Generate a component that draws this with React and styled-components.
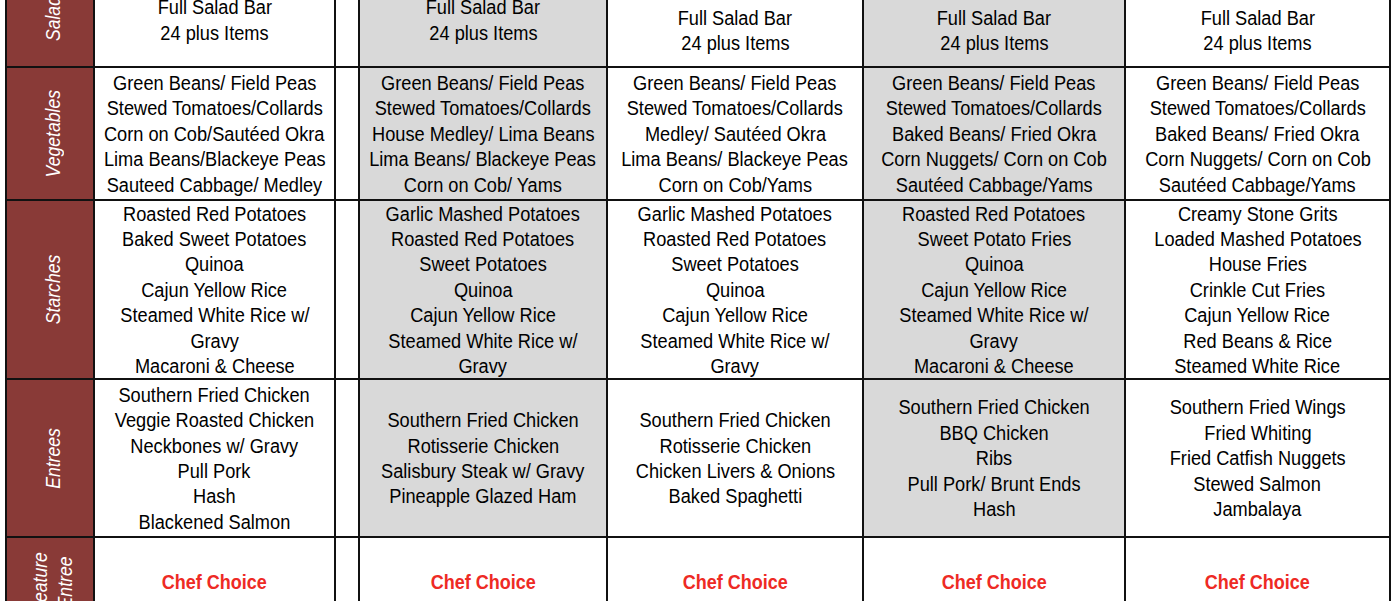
import React from 'react';
import styled, { createGlobalStyle } from 'styled-components';

const GlobalStyle = createGlobalStyle`
  html, body {
    margin: 0;
    padding: 0;
    background: #ffffff;
    overflow: hidden;
  }
`;

const rows = [
  {
    label: ['Salad'],
    height: 72,
    labelLift: 22,
    cells: [
      ['Full Salad Bar', '24 plus Items'],
      ['Full Salad Bar', '24 plus Items'],
      ['Full Salad Bar', '24 plus Items'],
      ['Full Salad Bar', '24 plus Items'],
      ['Full Salad Bar', '24 plus Items'],
    ],
    lift: [21, 21, 0, 0, 0],
  },
  {
    label: ['Vegetables'],
    height: 131,
    cells: [
      ['Green Beans/ Field Peas', 'Stewed Tomatoes/Collards', 'Corn on Cob/Sautéed Okra', 'Lima Beans/Blackeye Peas', 'Sauteed Cabbage/ Medley'],
      ['Green Beans/ Field Peas', 'Stewed Tomatoes/Collards', 'House Medley/ Lima Beans', 'Lima Beans/ Blackeye Peas', 'Corn on Cob/ Yams'],
      ['Green Beans/ Field Peas', 'Stewed Tomatoes/Collards', 'Medley/ Sautéed Okra', 'Lima Beans/ Blackeye Peas', 'Corn on Cob/Yams'],
      ['Green Beans/ Field Peas', 'Stewed Tomatoes/Collards', 'Baked Beans/ Fried Okra', 'Corn Nuggets/ Corn on Cob', 'Sautéed Cabbage/Yams'],
      ['Green Beans/ Field Peas', 'Stewed Tomatoes/Collards', 'Baked Beans/ Fried Okra', 'Corn Nuggets/ Corn on Cob', 'Sautéed Cabbage/Yams'],
    ],
  },
  {
    label: ['Starches'],
    height: 177,
    cells: [
      ['Roasted Red Potatoes', 'Baked Sweet Potatoes', 'Quinoa', 'Cajun Yellow Rice', 'Steamed White Rice w/', 'Gravy', 'Macaroni & Cheese'],
      ['Garlic Mashed Potatoes', 'Roasted Red Potatoes', 'Sweet Potatoes', 'Quinoa', 'Cajun Yellow Rice', 'Steamed White Rice w/', 'Gravy'],
      ['Garlic Mashed Potatoes', 'Roasted Red Potatoes', 'Sweet Potatoes', 'Quinoa', 'Cajun Yellow Rice', 'Steamed White Rice w/', 'Gravy'],
      ['Roasted Red Potatoes', 'Sweet Potato Fries', 'Quinoa', 'Cajun Yellow Rice', 'Steamed White Rice w/', 'Gravy', 'Macaroni & Cheese'],
      ['Creamy Stone Grits', 'Loaded Mashed Potatoes', 'House Fries', 'Crinkle Cut Fries', 'Cajun Yellow Rice', 'Red Beans & Rice', 'Steamed White Rice'],
    ],
  },
  {
    label: ['Entrees'],
    height: 156,
    cells: [
      ['Southern Fried Chicken', 'Veggie Roasted Chicken', 'Neckbones w/ Gravy', 'Pull Pork', 'Hash', 'Blackened Salmon'],
      ['Southern Fried Chicken', 'Rotisserie Chicken', 'Salisbury Steak w/ Gravy', 'Pineapple Glazed Ham'],
      ['Southern Fried Chicken', 'Rotisserie Chicken', 'Chicken Livers & Onions', 'Baked Spaghetti'],
      ['Southern Fried Chicken', 'BBQ Chicken', 'Ribs', 'Pull Pork/ Brunt Ends', 'Hash'],
      ['Southern Fried Wings', 'Fried Whiting', 'Fried Catfish Nuggets', 'Stewed Salmon', 'Jambalaya'],
    ],
  },
  {
    label: ['Feature', 'Entree'],
    height: 88,
    feature: true,
    cells: [['Chef Choice'], ['Chef Choice'], ['Chef Choice'], ['Chef Choice'], ['Chef Choice']],
  },
];

// days 2 and 4 are shaded grey, except on the feature row
const shaded = [false, true, false, true, false];

const DayCell = ({ lines, shade, lift, feature }) => (
  <ItemCell $shaded={shade} $lift={lift}>
    {lines.map((line, li) => (
      <Line key={li} $feature={feature}>{line}</Line>
    ))}
  </ItemCell>
);

const App = () => (
  <>
    <GlobalStyle />
    <MenuGrid $rows={rows.map((r) => r.height)}>
      {rows.map((row, ri) => (
        <React.Fragment key={ri}>
          <LabelCell $lift={row.labelLift || 0}>
            <LabelText>
              {row.label.map((l) => (
                <span key={l}>{l}</span>
              ))}
            </LabelText>
          </LabelCell>
          {row.cells.map((lines, ci) => (
            <React.Fragment key={ci}>
              {ci === 1 && <Spacer />}
              <DayCell
                lines={lines}
                shade={shaded[ci] && !row.feature}
                lift={row.lift ? row.lift[ci] : 0}
                feature={row.feature}
              />
            </React.Fragment>
          ))}
        </React.Fragment>
      ))}
    </MenuGrid>
  </>
);

const MenuGrid = styled.div`
  display: grid;
  grid-template-columns: 86px 239px 22px 246px 254px 260px 263px;
  grid-template-rows: ${(p) => p.$rows.map((h) => `${h}px`).join(' ')};
  gap: 2px;
  padding: 2px;
  width: max-content;
  margin: -8px 0 0 5px;
  background: #111111;
`;

const LabelCell = styled.div`
  display: flex;
  align-items: center;
  justify-content: center;
  padding: 0 0 ${(p) => p.$lift}px 6px;
  background: #893a37;
  overflow: hidden;
`;

const LabelText = styled.div`
  writing-mode: vertical-rl;
  transform: rotate(180deg) scaleY(0.88);
  display: flex;
  flex-direction: column;
  align-items: center;
  font-family: 'Liberation Sans', Arial, sans-serif;
  font-style: italic;
  font-size: 20px;
  line-height: 25px;
  color: #ffffff;
  white-space: nowrap;
`;

const ItemCell = styled.div`
  display: flex;
  flex-direction: column;
  align-items: center;
  justify-content: center;
  padding-top: 2px;
  padding-bottom: ${(p) => p.$lift}px;
  background: ${(p) => (p.$shaded ? '#d9d9d9' : '#ffffff')};
  overflow: hidden;
`;

const Spacer = styled.div`
  background: #ffffff;
`;

const Line = styled.div`
  display: inline-block;
  transform: scaleX(${(p) => (p.$feature ? 0.9 : 0.91)});
  font-family: 'Liberation Sans', Arial, sans-serif;
  font-size: 20px;
  font-weight: ${(p) => (p.$feature ? 700 : 400)};
  line-height: 25.4px;
  color: ${(p) => (p.$feature ? '#ee2a24' : '#000000')};
  white-space: nowrap;
  text-align: center;
`;

export default App;
